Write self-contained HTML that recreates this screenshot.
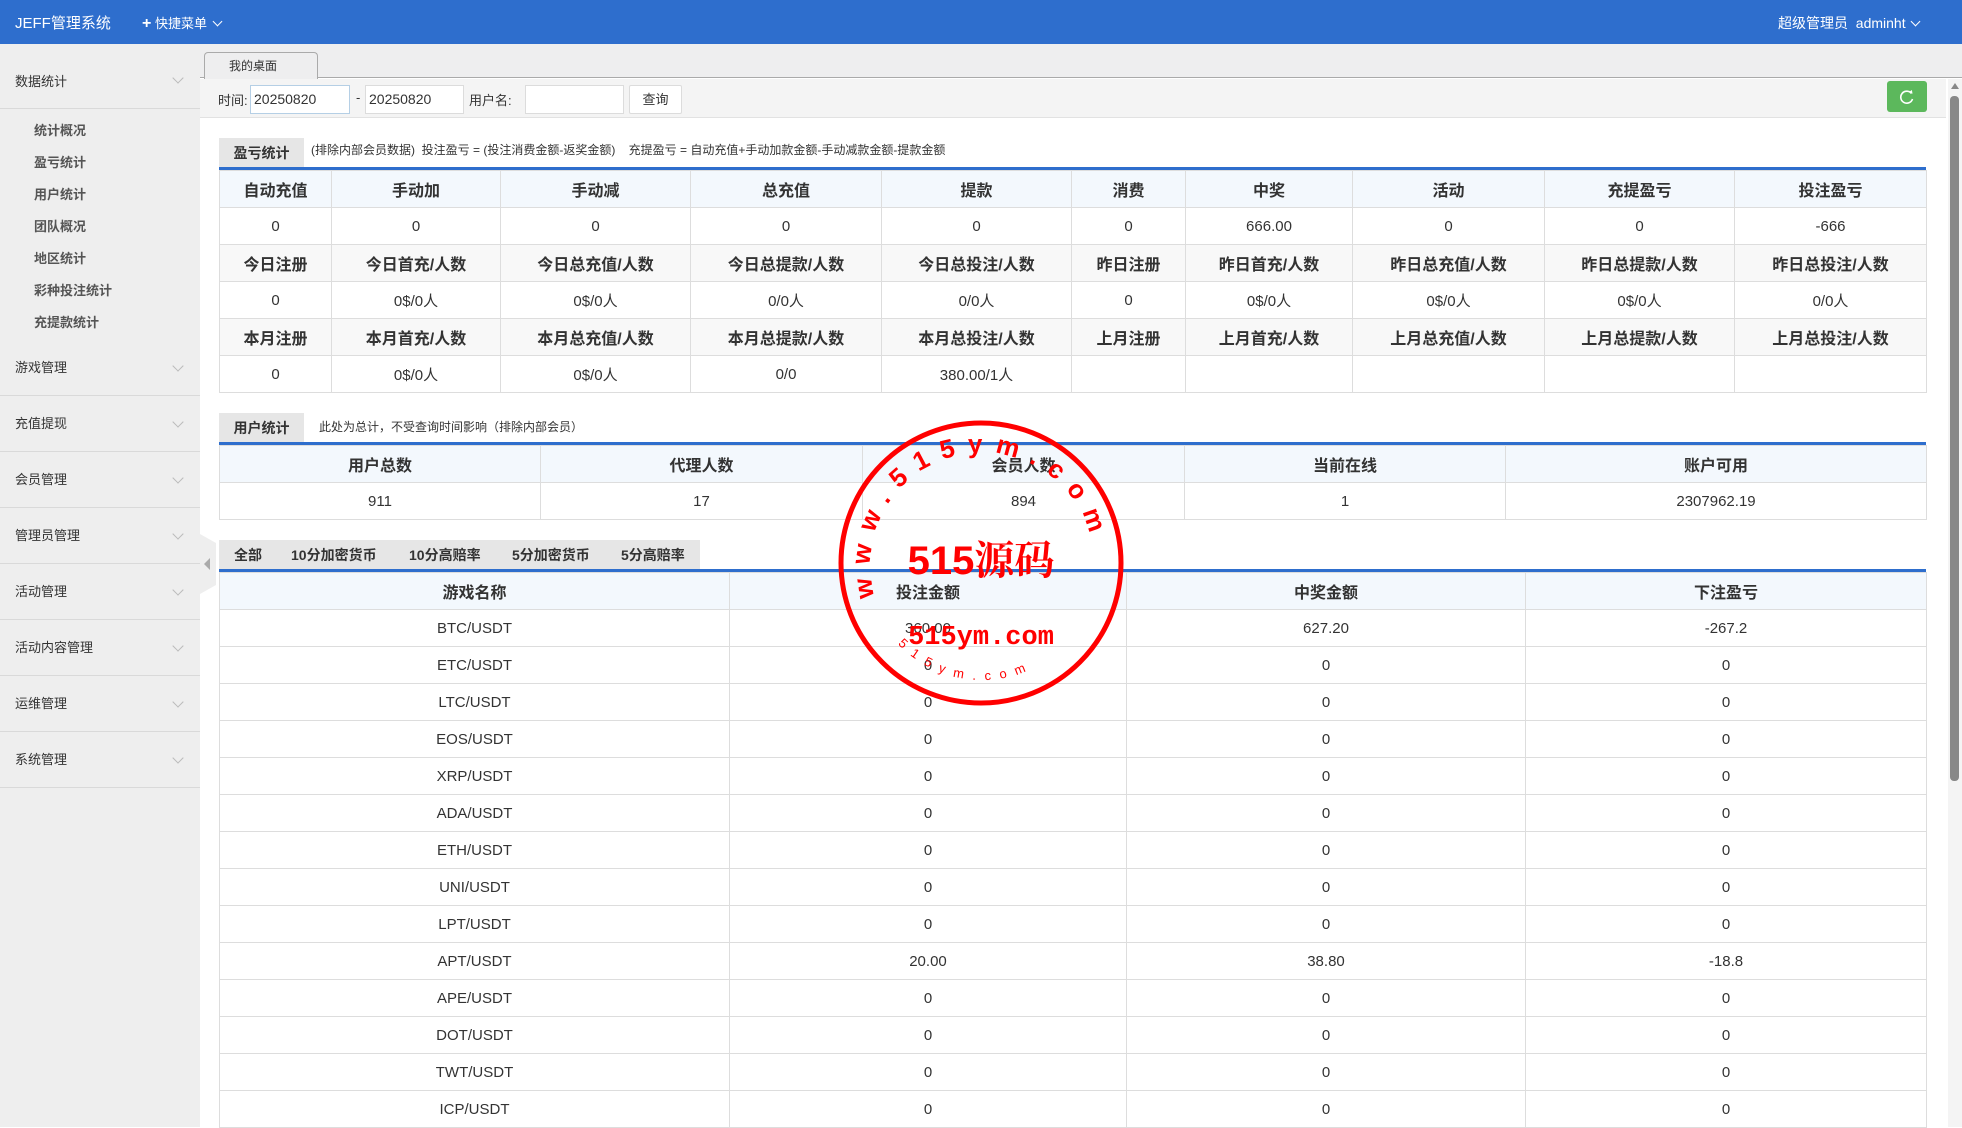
<!DOCTYPE html>
<html><head><meta charset="utf-8"><style>
*{margin:0;padding:0;box-sizing:border-box}
body{width:1962px;height:1127px;overflow:hidden;font-family:"Liberation Sans","Noto Sans CJK SC",sans-serif;background:#fff;position:relative;color:#333}
.abs{position:absolute}
#hd{left:0;top:0;width:1962px;height:44px;background:#2e6ecd;color:#fff}
#sb{left:0;top:44px;width:200px;height:1083px;background:#eee}
.grp{position:absolute;left:0;width:200px;height:56px;border-bottom:1px solid #d9d9d9;font-size:13px;color:#333;line-height:56px;padding-left:15px}
.chev{position:absolute;right:18px;top:22px;width:8px;height:8px;border-right:1px solid #bbb;border-bottom:1px solid #bbb;transform:rotate(45deg)}
.sub{position:absolute;left:34px;font-size:13px;color:#555;font-weight:bold}
table{border-collapse:collapse;table-layout:fixed;position:absolute}
td{border:1px solid #ddd;text-align:center;height:37px;font-size:15px;color:#333}
tr.h td{background:#f3f8fd;font-weight:bold;font-size:16px}
tr.g td{background:#f8f8f8;font-weight:bold;font-size:16px}
.inp{position:absolute;top:85px;height:29px;background:#fff;border:1px solid #dcdcdc;font-size:14px;line-height:27px;padding-left:3px}
.tabl{position:absolute;background:#e6e6e6;font-weight:bold;font-size:14px;color:#333;text-align:center}
.bl{position:absolute;left:219px;width:1707px;height:3px;background:#2e6ecd}
.note{position:absolute;font-size:12px;color:#333}
.gt{position:absolute;top:0;font-size:14px;font-weight:bold;line-height:30px}
</style></head><body>
<div id="hd" class="abs">
<div class="abs" style="left:15px;top:12px;font-size:15px">JEFF管理系统</div>
<div class="abs" style="left:142px;top:13px;font-size:13px"><b style="font-size:16px">+</b> 快捷菜单 <span style="display:inline-block;width:7px;height:7px;border-right:1.5px solid #fff;border-bottom:1.5px solid #fff;transform:rotate(45deg);margin-left:3px;position:relative;top:-3px"></span></div>
<div class="abs" style="left:1778px;top:13px;font-size:14px">超级管理员 &nbsp;adminht <span style="display:inline-block;width:7px;height:7px;border-right:1.5px solid #fff;border-bottom:1.5px solid #fff;transform:rotate(45deg);margin-left:3px;position:relative;top:-3px"></span></div>
</div>
<div id="sb" class="abs">
<div class="grp" style="top:0;height:65px;line-height:76px">数据统计<i class="chev" style="top:30px"></i></div>
<div class="sub" style="top:76px">统计概况</div>
<div class="sub" style="top:108px">盈亏统计</div>
<div class="sub" style="top:140px">用户统计</div>
<div class="sub" style="top:172px">团队概况</div>
<div class="sub" style="top:204px">地区统计</div>
<div class="sub" style="top:236px">彩种投注统计</div>
<div class="sub" style="top:268px">充提款统计</div>
<div class="grp" style="top:296px">游戏管理<i class="chev"></i></div>
<div class="grp" style="top:352px">充值提现<i class="chev"></i></div>
<div class="grp" style="top:408px">会员管理<i class="chev"></i></div>
<div class="grp" style="top:464px">管理员管理<i class="chev"></i></div>
<div class="grp" style="top:520px">活动管理<i class="chev"></i></div>
<div class="grp" style="top:576px">活动内容管理<i class="chev"></i></div>
<div class="grp" style="top:632px">运维管理<i class="chev"></i></div>
<div class="grp" style="top:688px">系统管理<i class="chev"></i></div>
</div>
<div class="abs" style="left:200px;top:534px;width:16px;height:60px;background:#eee;clip-path:polygon(0 0,100% 15%,100% 85%,0 100%)"></div>
<div class="abs" style="left:204px;top:558px;border-right:6px solid #aaa;border-top:6px solid transparent;border-bottom:6px solid transparent"></div>
<!-- tab bar -->
<div class="abs" style="left:200px;top:44px;width:1762px;height:34px;background:#eeeeef;border-bottom:1px solid #aaa"></div>
<div class="abs" style="left:204px;top:52px;width:114px;height:27px;background:#eeeeef;border:1px solid #aaa;border-bottom:none;border-radius:4px 4px 0 0;font-size:12px;line-height:26px;padding-left:24px">我的桌面</div>
<div class="abs" style="left:200px;top:79px;width:1746px;height:39px;background:#f4f4f4;border-bottom:1px solid #e2e2e2"></div>
<div class="abs" style="left:218px;top:90px;font-size:13px">时间:</div>
<div class="inp" style="left:250px;width:100px;border-color:#b5cfe5">20250820</div>
<div class="abs" style="left:356px;top:90px;font-size:13px">-</div>
<div class="inp" style="left:365px;width:99px">20250820</div>
<div class="abs" style="left:469px;top:90px;font-size:13px">用户名:</div>
<div class="inp" style="left:525px;width:99px"></div>
<div class="abs" style="left:629px;top:85px;width:53px;height:29px;background:#fff;border:1px solid #dcdcdc;border-radius:2px;font-size:13px;text-align:center;line-height:27px">查询</div>
<div class="abs" style="left:1887px;top:81px;width:40px;height:31px;background:#5cb85c;border-radius:3px"><svg width="40" height="31"><path d="M24.5 12.5A6 6 0 1 0 25.5 18" fill="none" stroke="#fff" stroke-width="1.6"/><path d="M22 11l3.5 1.8-0.6-3.8z" fill="#fff"/></svg></div>
<div class="abs" style="left:1948px;top:79px;width:14px;height:1048px;background:#f4f4f4"></div>
<div class="abs" style="left:1950px;top:96px;width:9px;height:685px;background:#888;border-radius:4px"></div>
<div class="abs" style="left:1951px;top:83px;border-bottom:6px solid #888;border-left:4px solid transparent;border-right:4px solid transparent"></div>
<!-- section 1 -->
<div class="tabl" style="left:219px;top:138px;width:85px;height:30px;line-height:30px;font-size:14px">盈亏统计</div>
<div class="note" style="left:311px;top:141px">(排除内部会员数据)&nbsp; 投注盈亏 = (投注消费金额-返奖金额)&nbsp;&nbsp;&nbsp; 充提盈亏 = 自动充值+手动加款金额-手动减款金额-提款金额</div>
<div class="bl" style="top:167px"></div>
<table style="left:219px;top:170px;width:1707px">
<colgroup><col style="width:112px"><col style="width:169px"><col style="width:190px"><col style="width:191px"><col style="width:190px"><col style="width:114px"><col style="width:167px"><col style="width:192px"><col style="width:190px"><col style="width:192px"></colgroup>
<tr class="h"><td>自动充值</td><td>手动加</td><td>手动减</td><td>总充值</td><td>提款</td><td>消费</td><td>中奖</td><td>活动</td><td>充提盈亏</td><td>投注盈亏</td></tr>
<tr><td>0</td><td>0</td><td>0</td><td>0</td><td>0</td><td>0</td><td>666.00</td><td>0</td><td>0</td><td>-666</td></tr>
<tr class="g"><td>今日注册</td><td>今日首充/人数</td><td>今日总充值/人数</td><td>今日总提款/人数</td><td>今日总投注/人数</td><td>昨日注册</td><td>昨日首充/人数</td><td>昨日总充值/人数</td><td>昨日总提款/人数</td><td>昨日总投注/人数</td></tr>
<tr><td>0</td><td>0$/0人</td><td>0$/0人</td><td>0/0人</td><td>0/0人</td><td>0</td><td>0$/0人</td><td>0$/0人</td><td>0$/0人</td><td>0/0人</td></tr>
<tr class="g"><td>本月注册</td><td>本月首充/人数</td><td>本月总充值/人数</td><td>本月总提款/人数</td><td>本月总投注/人数</td><td>上月注册</td><td>上月首充/人数</td><td>上月总充值/人数</td><td>上月总提款/人数</td><td>上月总投注/人数</td></tr>
<tr><td>0</td><td>0$/0人</td><td>0$/0人</td><td>0/0</td><td>380.00/1人</td><td></td><td></td><td></td><td></td><td></td></tr>
</table>
<!-- section 2 -->
<div class="tabl" style="left:219px;top:413px;width:85px;height:30px;line-height:30px;font-size:14px">用户统计</div>
<div class="note" style="left:319px;top:418px">此处为总计，不受查询时间影响（排除内部会员）</div>
<div class="bl" style="top:442px"></div>
<table style="left:219px;top:445px;width:1707px">
<colgroup><col style="width:321px"><col style="width:322px"><col style="width:322px"><col style="width:321px"><col style="width:421px"></colgroup>
<tr class="h"><td>用户总数</td><td>代理人数</td><td>会员人数</td><td>当前在线</td><td>账户可用</td></tr>
<tr><td>911</td><td>17</td><td>894</td><td>1</td><td>2307962.19</td></tr>
</table>
<!-- section 3 -->
<div class="abs" style="left:219px;top:540px;width:481px;height:30px;background:#e6e6e6">
<span class="gt" style="left:15px">全部</span>
<span class="gt" style="left:72px">10分加密货币</span>
<span class="gt" style="left:190px">10分高赔率</span>
<span class="gt" style="left:293px">5分加密货币</span>
<span class="gt" style="left:402px">5分高赔率</span>
</div>
<div class="bl" style="top:569px"></div>
<table style="left:219px;top:572px;width:1707px">
<colgroup><col style="width:510px"><col style="width:397px"><col style="width:399px"><col style="width:401px"></colgroup>
<tr class="h"><td>游戏名称</td><td>投注金额</td><td>中奖金额</td><td>下注盈亏</td></tr>
<tr><td>BTC/USDT</td><td>360.00</td><td>627.20</td><td>-267.2</td></tr>
<tr><td>ETC/USDT</td><td>0</td><td>0</td><td>0</td></tr>
<tr><td>LTC/USDT</td><td>0</td><td>0</td><td>0</td></tr>
<tr><td>EOS/USDT</td><td>0</td><td>0</td><td>0</td></tr>
<tr><td>XRP/USDT</td><td>0</td><td>0</td><td>0</td></tr>
<tr><td>ADA/USDT</td><td>0</td><td>0</td><td>0</td></tr>
<tr><td>ETH/USDT</td><td>0</td><td>0</td><td>0</td></tr>
<tr><td>UNI/USDT</td><td>0</td><td>0</td><td>0</td></tr>
<tr><td>LPT/USDT</td><td>0</td><td>0</td><td>0</td></tr>
<tr><td>APT/USDT</td><td>20.00</td><td>38.80</td><td>-18.8</td></tr>
<tr><td>APE/USDT</td><td>0</td><td>0</td><td>0</td></tr>
<tr><td>DOT/USDT</td><td>0</td><td>0</td><td>0</td></tr>
<tr><td>TWT/USDT</td><td>0</td><td>0</td><td>0</td></tr>
<tr><td>ICP/USDT</td><td>0</td><td>0</td><td>0</td></tr>
</table>
<!-- stamp -->
<svg class="abs" style="left:830px;top:412px" width="302" height="302" viewBox="0 0 302 302">
<defs><path id="arc" d="M45 185 A112 112 0 1 1 262 175"/><path id="arc2" d="M68 232 A116 116 0 0 0 236 232"/></defs>
<circle cx="151" cy="151" r="140" fill="none" stroke="#f00" stroke-width="5"/>
<text font-family="Liberation Sans,sans-serif" font-weight="bold" font-size="26" fill="#f00" letter-spacing="12"><textPath href="#arc">www.515ym.com</textPath></text>
<text x="151" y="162" text-anchor="middle" font-family="Liberation Sans,'Noto Serif CJK SC',sans-serif" font-weight="bold" font-size="40" fill="#f00">515源码</text>
<text x="151" y="232" text-anchor="middle" font-family="Liberation Mono,monospace" font-weight="bold" font-size="27" fill="#f00">515ym.com</text>
<text font-family="Liberation Sans,sans-serif" font-size="13" fill="#f00" letter-spacing="9"><textPath href="#arc2">515ym.com</textPath></text>
</svg>
</body></html>
